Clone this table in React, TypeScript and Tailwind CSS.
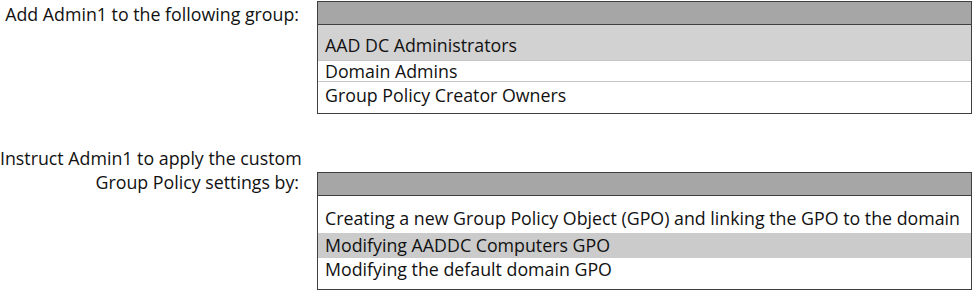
import React from "react";

export default function App() {
  return (
    <div
      className="w-[973px] h-[291px] bg-white text-[#111111] overflow-hidden"
      style={{ fontFamily: "'Open Sans', Lato, sans-serif" }}
    >
      {/* Section 1 */}
      <div className="flex items-start pt-[1px]">
        <div className="w-[299px] text-right text-[17.8px] leading-[24px] mt-[1px] whitespace-nowrap">
          Add Admin1 to the following group:
        </div>
        <div className="ml-[18px] w-[655px] border border-[#3f3f3f] text-[17.8px] leading-[20px] whitespace-nowrap">
          <div className="h-[23px] bg-[#a6a6a6] border-b border-[#3f3f3f]" />
          <div className="h-[36px] bg-[#d2d2d2] pl-[7px] pt-[10px] border-b border-[#c4c4c4]">
            AAD DC Administrators
          </div>
          <div className="h-[21px] pl-[7px] border-b border-[#c4c4c4]">Domain Admins</div>
          <div className="h-[31px] pl-[7px] pt-[3px]">Group Policy Creator Owners</div>
        </div>
      </div>

      {/* Section 2 */}
      <div className="flex items-start mt-[32px]">
        <div className="w-[299px] text-right text-[17.8px] leading-[24px] whitespace-nowrap">
          <div>Instruct Admin1 to apply the custom</div>
          <div>Group Policy settings by:</div>
        </div>
        <div className="ml-[18px] mt-[26px] w-[655px] border border-[#3f3f3f] text-[17.8px] leading-[20px] whitespace-nowrap">
          <div className="h-[23px] bg-[#a6a6a6] border-b border-[#3f3f3f]" />
          <div className="h-[37px] pl-[7px] pt-[12px]">
            Creating a new Group Policy Object (GPO) and linking the GPO to the domain
          </div>
          <div className="h-[25px] bg-[#cbcbcb] pl-[7px] pt-[2px]">Modifying AADDC Computers GPO</div>
          <div className="h-[31px] pl-[7px] pt-[1px]">Modifying the default domain GPO</div>
        </div>
      </div>
    </div>
  );
}
